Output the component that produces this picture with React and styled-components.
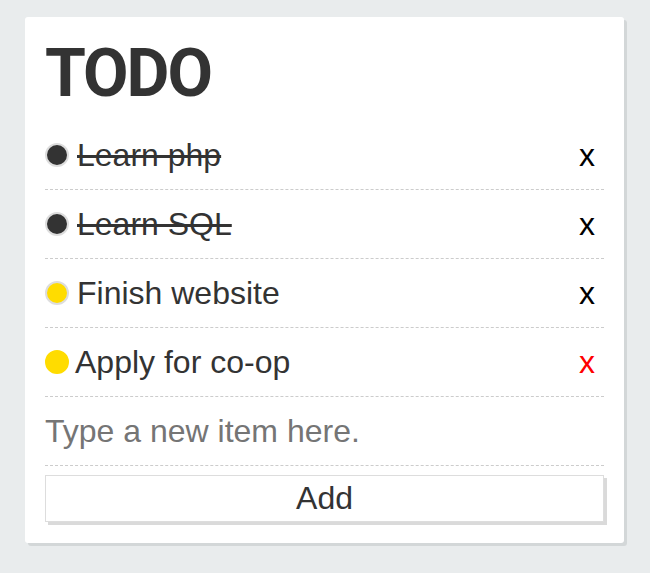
import React from 'react';
import styled, { createGlobalStyle } from 'styled-components';

const GlobalStyle = createGlobalStyle`
  body {
    margin: 0;
    background: #e9eced;
    font-family: "Liberation Sans", Arial, sans-serif;
  }
`;

const Page = styled.div`
  padding: 17px 0 28px 25px;
`;

const Card = styled.div`
  width: 599px;
  box-sizing: border-box;
  padding: 20px 20px 21px;
  background: #fff;
  border-radius: 3px;
  box-shadow: 3px 3px 0 #d3d7d8;
`;

const Title = styled.h1`
  margin: 4px 0 14px;
  font-family: Roboto, "Liberation Sans", sans-serif;
  font-weight: 700;
  font-size: 66px;
  line-height: 66px;
  letter-spacing: -2px;
  color: #333;
`;

const List = styled.ul`
  list-style: none;
  margin: 0;
  padding: 0;
`;

const Row = styled.li`
  display: flex;
  align-items: center;
  height: 68px;
  border-bottom: 1px dashed #ccc;
`;

const Dot = styled.span`
  flex: none;
  width: 20px;
  height: 20px;
  border-radius: 50%;
  background: ${p => (p.$done ? '#333' : '#ffdc00')};
  border: 2px solid ${p => (p.$hover ? '#ffdc00' : '#ddd')};
  margin-right: ${p => (p.$hover ? '6px' : '8px')};
`;

const Label = styled.span`
  flex: 1;
  font-size: 32px;
  color: #333;
  text-decoration: ${p => (p.$done ? 'line-through' : 'none')};
`;

const Remove = styled.button`
  border: none;
  background: none;
  padding: 0 9px 0 0;
  font-family: inherit;
  font-size: 32px;
  color: ${p => (p.$hover ? '#f00' : '#000')};
  cursor: pointer;
`;

const NewItem = styled.input`
  display: block;
  width: 100%;
  box-sizing: border-box;
  height: 69px;
  border: none;
  border-bottom: 1px dashed #ccc;
  padding: 0;
  font-family: inherit;
  font-size: 32px;
  color: #333;
  outline: none;

  &::placeholder {
    color: #757575;
  }
`;

const AddButton = styled.button`
  display: block;
  width: 100%;
  height: 47px;
  margin-top: 9px;
  background: #fff;
  border: 1px solid #ddd;
  box-shadow: 3px 3px 0 #dadada;
  font-family: inherit;
  font-size: 32px;
  color: #333;
  cursor: pointer;
`;

const items = [
  { text: 'Learn php', done: true },
  { text: 'Learn SQL', done: true },
  { text: 'Finish website', done: false },
  { text: 'Apply for co-op', done: false, hover: true },
];

export default function App() {
  return (
    <Page>
      <GlobalStyle />
      <Card>
        <Title>TODO</Title>
        <List>
          {items.map(item => (
            <Row key={item.text}>
              <Dot $done={item.done} $hover={item.hover} />
              <Label $done={item.done}>{item.text}</Label>
              <Remove $hover={item.hover}>x</Remove>
            </Row>
          ))}
        </List>
        <NewItem placeholder="Type a new item here." />
        <AddButton>Add</AddButton>
      </Card>
    </Page>
  );
}
